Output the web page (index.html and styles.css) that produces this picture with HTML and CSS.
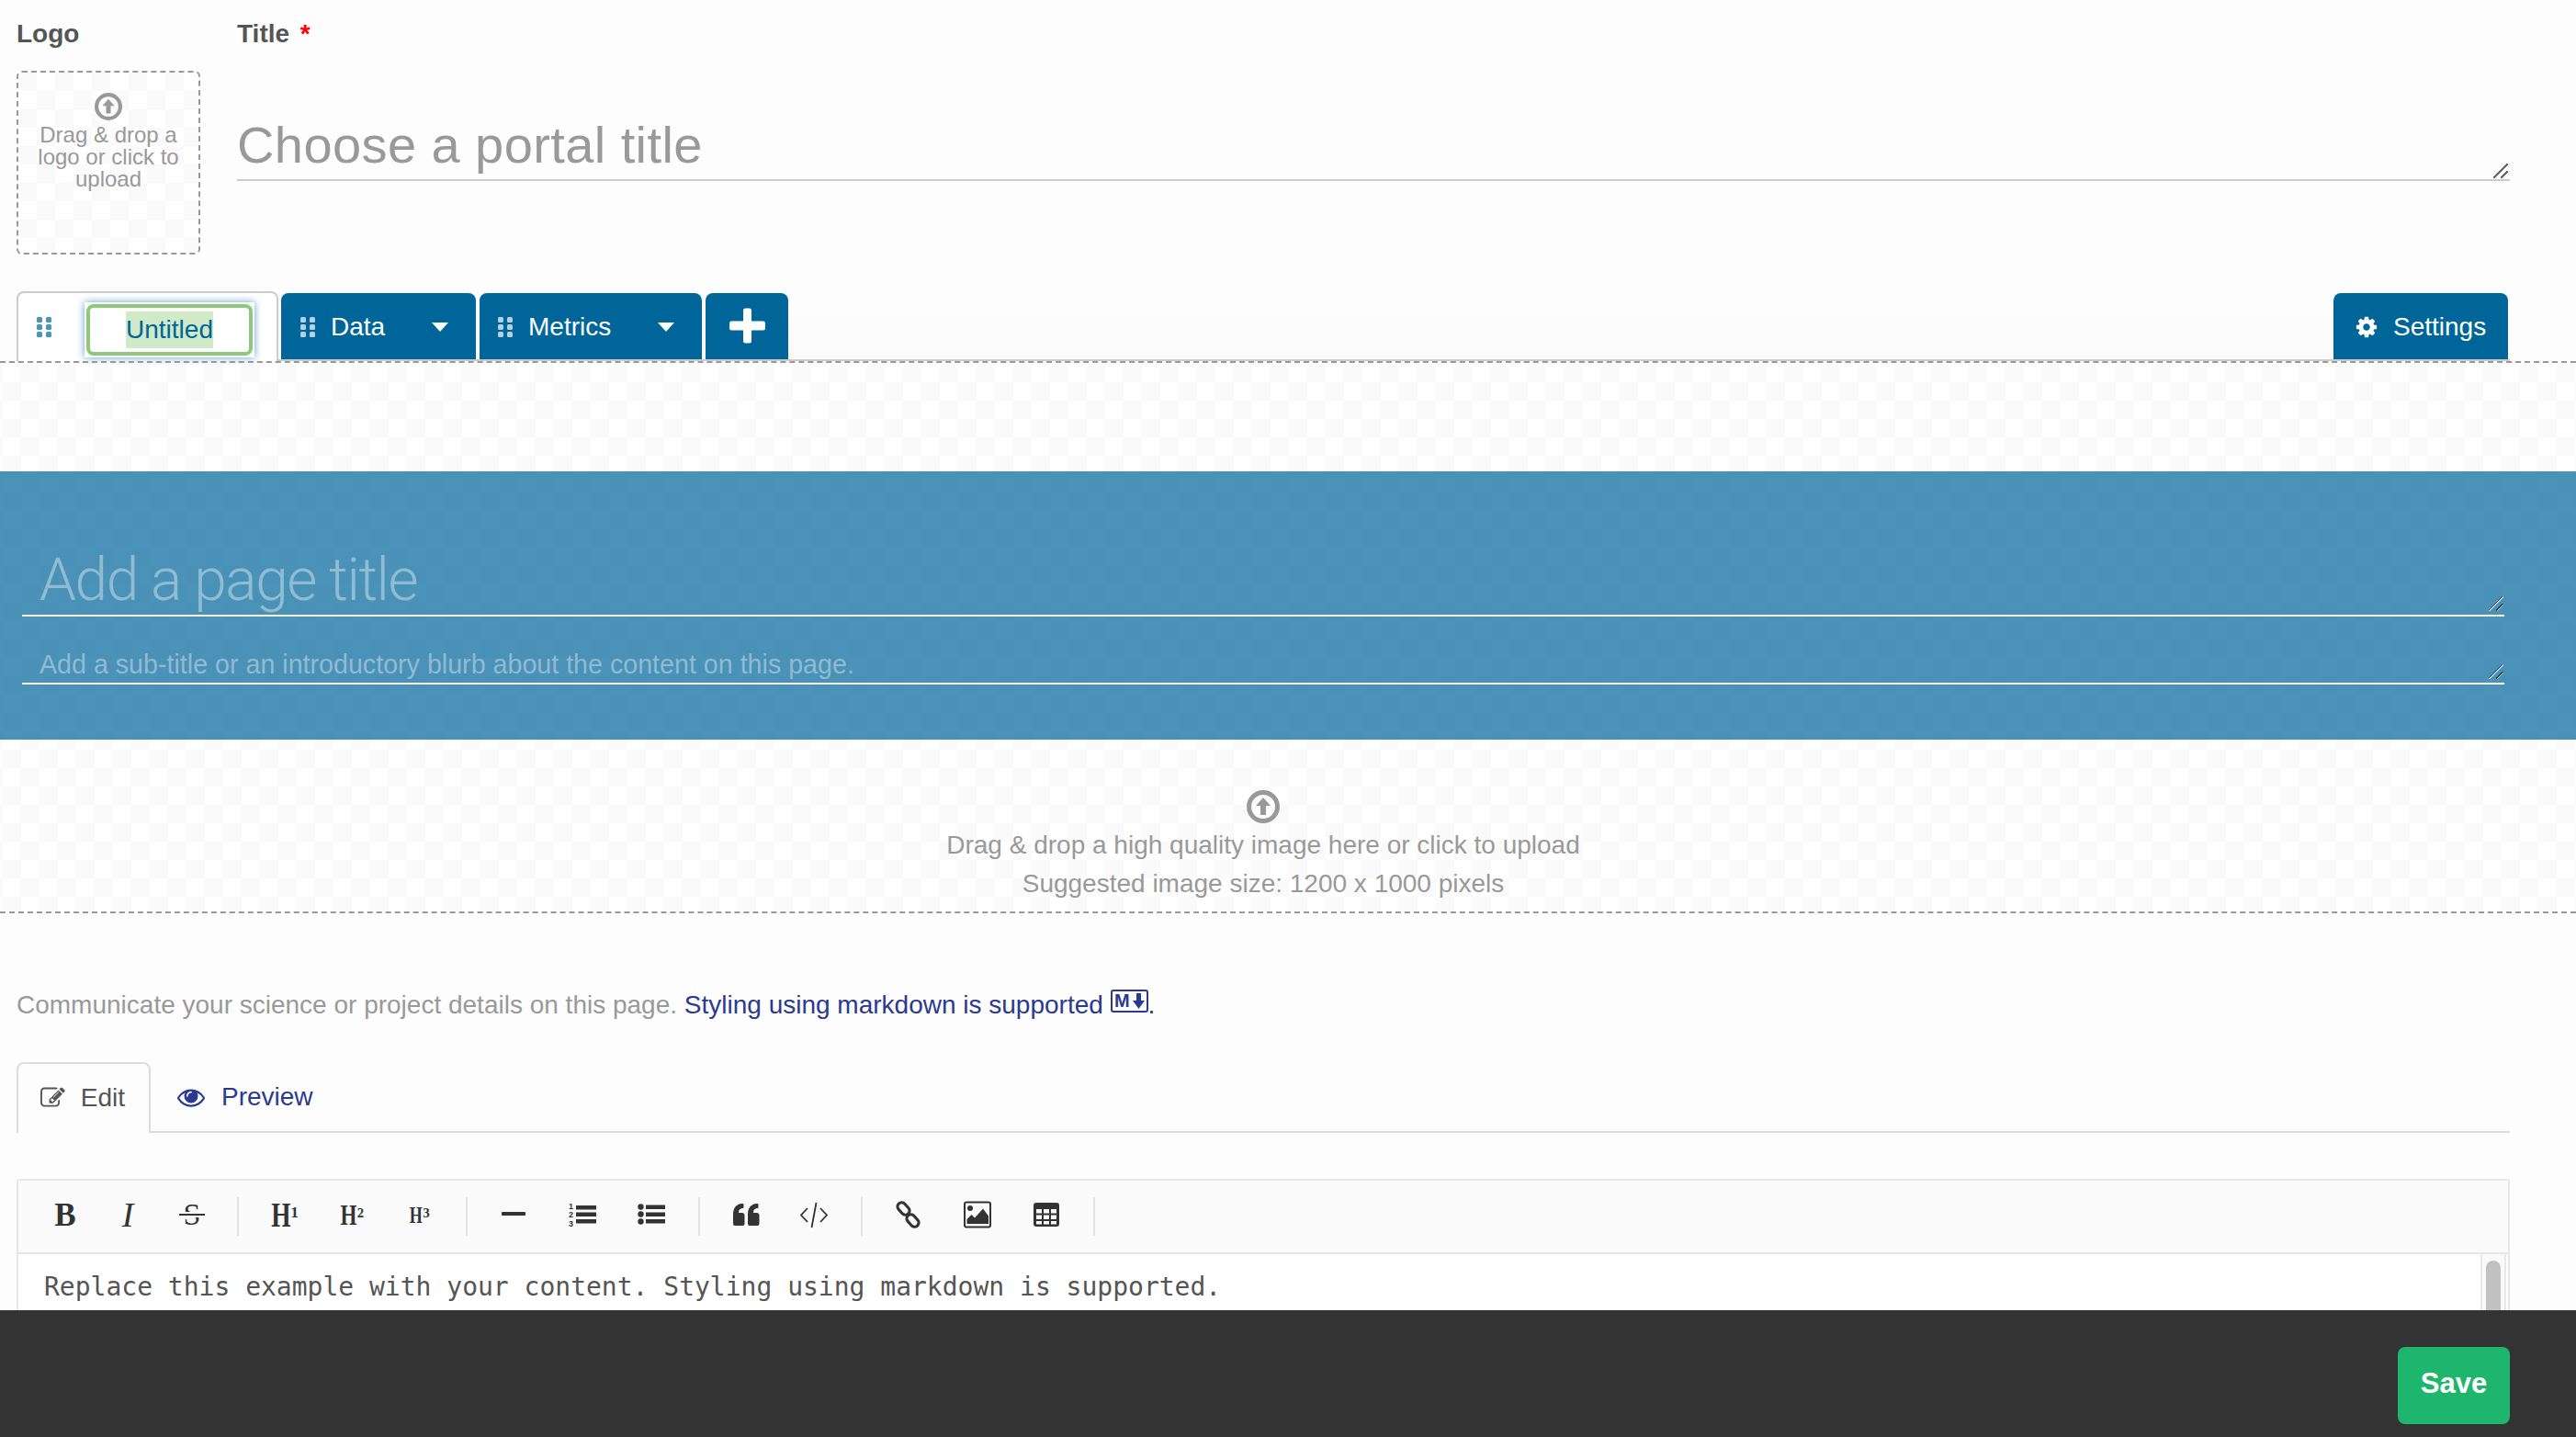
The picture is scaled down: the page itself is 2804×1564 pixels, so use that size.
FILE: index.html
```html
<!DOCTYPE html>
<html lang="en">
<head>
    <meta charset="UTF-8">
    <title>New portal</title>
    <link rel="stylesheet" href="styles.css">
</head>
<body>
    <main class="content">
        <div class="top-form">
            <div class="logo-col">
                <label class="field-label">Logo</label>
                <div class="logo-drop checker">
                    <svg class="upload-icon logo-icon" viewBox="0 0 36 36"><circle cx="18" cy="18" r="15.500" fill="none" stroke="currentColor" stroke-width="5"/><path d="M18 8l8 9h-5v10h-6V17h-5z" fill="currentColor"/></svg>
                    <span>Drag &amp; drop a logo or click to upload</span>
                </div>
            </div>
            <div class="title-col">
                <label class="field-label">Title <span class="req">*</span></label>
                <textarea class="portal-title" placeholder="Choose a portal title"></textarea>
            </div>
        </div>

        <div class="tab-row">
            <div class="page-tab active-tab">
                <svg class="grip" viewBox="0 0 16 22"><g fill="currentColor"><rect x="0" width="6" height="6" rx="1.500"/><rect x="10" width="6" height="6" rx="1.500"/><rect x="0" y="8" width="6" height="6" rx="1.500"/><rect x="10" y="8" width="6" height="6" rx="1.500"/><rect x="0" y="16" width="6" height="6" rx="1.500"/><rect x="10" y="16" width="6" height="6" rx="1.500"/></g></svg>
                <div class="tab-name"><div class="tab-name-box"><span class="tab-name-sel">Untitled</span></div></div>
            </div>
            <div class="page-tab blue-tab data-tab">
                <svg class="grip" viewBox="0 0 16 22"><g fill="currentColor"><rect x="0" width="6" height="6" rx="1.500"/><rect x="10" width="6" height="6" rx="1.500"/><rect x="0" y="8" width="6" height="6" rx="1.500"/><rect x="10" y="8" width="6" height="6" rx="1.500"/><rect x="0" y="16" width="6" height="6" rx="1.500"/><rect x="10" y="16" width="6" height="6" rx="1.500"/></g></svg>
                <span class="tab-text">Data</span>
                <span class="caret"></span>
            </div>
            <div class="page-tab blue-tab metrics-tab">
                <svg class="grip" viewBox="0 0 16 22"><g fill="currentColor"><rect x="0" width="6" height="6" rx="1.500"/><rect x="10" width="6" height="6" rx="1.500"/><rect x="0" y="8" width="6" height="6" rx="1.500"/><rect x="10" y="8" width="6" height="6" rx="1.500"/><rect x="0" y="16" width="6" height="6" rx="1.500"/><rect x="10" y="16" width="6" height="6" rx="1.500"/></g></svg>
                <span class="tab-text">Metrics</span>
                <span class="caret"></span>
            </div>
            <div class="page-tab blue-tab add-tab">
                <svg class="plus" viewBox="0 0 39 39"><path d="M15 3a2.500 2.500 0 0 1 2.500-2.500h4A2.500 2.500 0 0 1 24 3v11.500h12.500A2.500 2.500 0 0 1 39 17v5a2.500 2.500 0 0 1-2.500 2.500H24V36a2.500 2.500 0 0 1-2.500 2.500h-4A2.500 2.500 0 0 1 15 36V24.500H2.500A2.500 2.500 0 0 1 0 22v-5a2.500 2.500 0 0 1 2.500-2.500H15z" fill="currentColor"/></svg>
            </div>
            <div class="page-tab blue-tab settings-tab">
                <svg class="gear" viewBox="0 0 1792 1792"><path fill="currentColor" d="M1152 896q0-106-75-181t-181-75-181 75-75 181 75 181 181 75 181-75 75-181zm512-109v222q0 12-8 23t-20 13l-185 28q-19 54-39 91 35 50 107 138 10 12 10 25t-9 23q-27 37-99 108t-94 71q-12 0-26-9l-138-108q-44 23-91 38-16 136-29 186-7 28-36 28h-222q-14 0-24.500-8.500t-11.500-21.500l-28-184q-49-16-90-37l-141 107q-10 9-25 9-14 0-25-11-126-114-165-168-7-10-7-23 0-12 8-23 15-21 51-66.500t54-70.500q-27-50-41-99l-183-27q-13-2-21-12.500t-8-23.500v-222q0-12 8-23t19-13l186-28q14-46 39-92-40-57-107-138-10-12-10-24 0-10 9-23 26-36 98.500-107.500t94.500-71.500q13 0 26 10l138 107q44-23 91-38 16-136 29-186 7-28 36-28h222q14 0 24.500 8.500t11.500 21.500l28 184q49 16 90 37l142-107q9-9 24-9 13 0 25 10 129 119 165 170 7 8 7 22 0 12-8 23-15 21-51 66.500t-54 70.500q26 50 41 98l183 28q13 2 21 12.500t8 23.500z"/></svg>
                <span class="tab-text">Settings</span>
            </div>
        </div>

        <section class="hero checker">
            <div class="hero-band">
                <textarea class="page-title" placeholder="Add a page title"></textarea>
                <textarea class="page-blurb" placeholder="Add a sub-title or an introductory blurb about the content on this page."></textarea>
            </div>
            <div class="hero-drop">
                <svg class="upload-icon" viewBox="0 0 36 36"><circle cx="18" cy="18" r="15.500" fill="none" stroke="currentColor" stroke-width="5"/><path d="M18 8l8 9h-5v10h-6V17h-5z" fill="currentColor"/></svg>
                <p>Drag &amp; drop a high quality image here or click to upload</p>
                <p>Suggested image size: 1200 x 1000 pixels</p>
            </div>
        </section>

        <div class="body-edit">
            <p class="hint">Communicate your science or project details on this page. <a href="#md">Styling using markdown is supported</a> <svg class="md-mark" viewBox="0 0 41 25"><rect x="1" y="1" width="39" height="23" rx="2" fill="none" stroke="currentColor" stroke-width="2"/><text x="4" y="18.500" class="md-m">M</text><path d="M28 4h5v8h4l-6.500 9L24 12h4z" fill="currentColor"/></svg><a href="#md">.</a></p>

            <div class="edit-tabs">
                <div class="edit-tab edit-active">
                    <svg class="tab-icon" viewBox="0 0 1792 1792"><path fill="currentColor" d="M888 1184l116-116-152-152-116 116v56h96v96h56zm440-720q-16-16-33 1l-350 350q-17 17-1 33t33-1l350-350q17-17 1-33zm80 594v190q0 119-84.500 203.500t-203.500 84.500h-832q-119 0-203.500-84.500t-84.500-203.500v-832q0-119 84.500-203.500t203.500-84.500h832q63 0 117 25 15 7 18 23 3 17-9 29l-49 49q-14 14-32 8-23-6-45-6h-832q-66 0-113 47t-47 113v832q0 66 47 113t113 47h832q66 0 113-47t47-113v-126q0-13 9-22l64-64q15-15 35-7t20 29zm-96-738l288 288-672 672h-288v-288zm444 132l-92 92-288-288 92-92q28-28 68-28t68 28l152 152q28 28 28 68t-28 68z"/></svg>
                    <span>Edit</span>
                </div>
                <div class="edit-tab edit-preview">
                    <svg class="tab-icon" viewBox="0 0 1792 1792"><path fill="currentColor" d="M1664 960q-152-236-381-353 61 104 61 225 0 185-131.500 316.500t-316.500 131.500-316.500-131.500-131.500-316.500q0-121 61-225-229 117-381 353 133 205 333.500 326.500t434.500 121.500 434.500-121.500 333.500-326.500zm-720-384q0-20-14-34t-34-14q-125 0-214.500 89.500t-89.500 214.500q0 20 14 34t34 14 34-14 14-34q0-86 61-147t147-61q20 0 34-14t14-34zm848 384q0 34-20 69-140 230-376.500 368.500t-499.500 138.500-499.500-139-376.500-368q-20-35-20-69t20-69q140-229 376.500-368t499.500-139 499.500 139 376.500 368q20 35 20 69z"/></svg>
                    <span>Preview</span>
                </div>
            </div>

            <div class="editor">
                <div class="toolbar">
                    <span class="tool tool-b">B</span>
                    <span class="tool tool-i">I</span>
                    <span class="tool tool-s"><span class="strike">S</span></span>
                    <i class="tool-sep"></i>
                    <span class="tool tool-h h1"><b>H</b><sup>1</sup></span>
                    <span class="tool tool-h h2"><b>H</b><sup>2</sup></span>
                    <span class="tool tool-h h3"><b>H</b><sup>3</sup></span>
                    <i class="tool-sep"></i>
                    <span class="tool"><svg class="ic" viewBox="0 0 30 30"><rect x="2" y="12" width="26" height="4" rx="1" fill="currentColor"/></svg></span>
                    <span class="tool"><svg class="ic" viewBox="0 0 30 30"><g fill="currentColor"><rect x="8" y="5" width="22" height="4.500"/><rect x="8" y="12.500" width="22" height="4.500"/><rect x="8" y="20" width="22" height="4.500"/></g><g class="ol-nums"><text x="0" y="9">1</text><text x="0" y="18">2</text><text x="0" y="28">3</text></g></svg></span>
                    <span class="tool"><svg class="ic" viewBox="0 0 30 30"><g fill="currentColor"><circle cx="3.500" cy="6.500" r="3.200"/><circle cx="3.500" cy="14.500" r="3.200"/><circle cx="3.500" cy="22.500" r="3.200"/><rect x="9" y="4.500" width="21" height="4.500"/><rect x="9" y="12.500" width="21" height="4.500"/><rect x="9" y="20" width="21" height="4.500"/></g></svg></span>
                    <i class="tool-sep"></i>
                    <span class="tool tool-quote"><svg class="ic" viewBox="0 0 30 30"><path fill="currentColor" d="M3 27a2 2 0 0 1-2-2V15C1 8 4 3.500 11 3c1 0 1.500.5 1.500 1.500v2c0 1-.5 1.500-1.500 1.500-2.500.3-4 2-4 5h3.500c2 0 3 1 3 3V25a2 2 0 0 1-2 2zM19 27a2 2 0 0 1-2-2V15c0-7 3-11.500 10-12 1 0 1.500.5 1.500 1.500v2c0 1-.5 1.500-1.500 1.500-2.500.3-4 2-4 5h3.500c2 0 3 1 3 3V25a2 2 0 0 1-2 2z"/></svg></span>
                    <span class="tool"><svg class="ic" viewBox="0 0 30 30"><g fill="none" stroke="currentColor" stroke-width="1.800"><path d="M8 8l-7 7.500 7 7.500M22 8l7 7.500-7 7.500M17.500 2l-5 27"/></g></svg></span>
                    <i class="tool-sep"></i>
                    <span class="tool"><svg class="ic" viewBox="0 0 30 30"><g fill="none" stroke="currentColor" stroke-width="3.200"><rect x="2" y="4" width="15" height="9" rx="4.500" transform="rotate(48 9.500 8.500)"/><rect x="12" y="17" width="15" height="9" rx="4.500" transform="rotate(48 19.500 21.500)"/></g></svg></span>
                    <span class="tool"><svg class="ic" viewBox="0 0 30 30"><rect x="1" y="1.500" width="28" height="27" rx="2" fill="none" stroke="currentColor" stroke-width="2"/><circle cx="7" cy="8" r="3" fill="currentColor"/><path d="M3.500 25v-5l5-5 3.500 3.500 9-10 6 8V25z" fill="currentColor"/></svg></span>
                    <span class="tool"><svg class="ic" viewBox="0 0 30 30"><path fill="currentColor" fill-rule="evenodd" d="M4 2h22a3 3 0 0 1 3 3v20a3 3 0 0 1-3 3H4a3 3 0 0 1-3-3V5a3 3 0 0 1 3-3zM4 9v4.500h6V9zm8 0v4.500h6V9zm8 0v4.500h6V9zM4 15.500V20h6v-4.500zm8 0V20h6v-4.500zm8 0V20h6v-4.500zM4 22v3.500h6V22zm8 0v3.500h6V22zm8 0v3.500h6V22z"/></svg></span>
                    <i class="tool-sep"></i>
                </div>
                <div class="editor-body">
                    <pre class="editor-text">Replace this example with your content. Styling using markdown is supported.</pre>
                    <div class="scroll-track"><div class="scroll-thumb"></div></div>
                </div>
            </div>
        </div>
    </main>

    <footer class="save-bar">
        <button class="save-btn">Save</button>
    </footer>
</body>
</html>
```

FILE: styles.css
```css
html, body {
    height: 100%;
}
body {
    margin: 0;
    display: flex;
    flex-direction: column;
    overflow: hidden;
    background-color: #fdfdfd;
    font-family: "Liberation Sans", Arial, sans-serif;
    font-size: 28px;
    color: #555;
}
.content {
    flex: 1;
    min-height: 0;
    overflow: hidden;
}
.checker {
    background-color: #fff;
    background-image: conic-gradient(#fafafa 25%, transparent 0 50%, #fafafa 0 75%, transparent 0);
    background-size: 40px 40px;
}

/* logo + title */
.top-form {
    display: flex;
    gap: 40px;
    padding: 17px 72px 0 18px;
}
.logo-col {
    width: 200px;
    flex: none;
}
.title-col {
    flex: 1;
    display: flex;
    flex-direction: column;
}
.field-label {
    display: block;
    height: 40px;
    line-height: 40px;
    margin-bottom: 20px;
    font-weight: bold;
    font-size: 28px;
    color: #555;
}
.req {
    color: #f00;
    margin-left: 4px;
}
.logo-drop {
    box-sizing: border-box;
    height: 200px;
    border: 2px dashed #999;
    border-radius: 6px;
    padding: 22px 16px 0;
    background-position: 20px 0;
    text-align: center;
    font-size: 24px;
    line-height: 24px;
    color: #999;
}
.logo-drop span {
    display: block;
}
.upload-icon {
    display: block;
    width: 36px;
    height: 36px;
    margin: 0 auto;
    color: #999;
}
.logo-icon {
    width: 30px;
    height: 30px;
    margin-bottom: 4px;
}
textarea {
    display: block;
    box-sizing: border-box;
    width: 100%;
    margin: 0;
    background-color: transparent;
    border: 0;
    outline: 0;
    overflow: hidden;
    resize: none;
    font-family: inherit;
}
.portal-title {
    height: 80px;
    margin-top: 40px;
    padding: 8px 0 0;
    font-size: 56px;
    letter-spacing: .42px;
    line-height: 66px;
    border-bottom: 2px solid #ccc;
    background: linear-gradient(135deg, transparent 46%, #666 46% 54%, transparent 54%) right 2px bottom 1px / 16px 16px no-repeat,
        linear-gradient(135deg, transparent 42%, #666 42% 58%, transparent 58%) right 2px bottom 1px / 8px 8px no-repeat;
}
.portal-title::placeholder {
    color: #999;
    opacity: 1;
}

/* page tabs */
.tab-row {
    display: flex;
    align-items: flex-end;
    gap: 4px;
    height: 76px;
    margin: 40px 72px 0 18px;
    border-bottom: 2px solid #ccc;
    box-sizing: border-box;
    background: linear-gradient(to bottom, #fdfdfd 30%, #fafafa);
}
.page-tab {
    box-sizing: border-box;
    display: flex;
    align-items: center;
    height: 72px;
    border-radius: 8px 8px 0 0;
}
.blue-tab {
    padding-top: 2px;
    background-color: #069;
    color: #fff;
}
.active-tab {
    position: relative;
    width: 285px;
    height: 76px;
    margin-bottom: -2px;
    margin-right: -1px;
    padding: 0 24px 0 20px;
    background-color: #fff;
    border: 2px solid #ccc;
    border-bottom: 0;
    color: #069;
}
.grip {
    flex: none;
    width: 16px;
    height: 22px;
    color: rgba(255, 255, 255, .7);
}
.active-tab .grip {
    color: #4a93bb;
}
.tab-name {
    box-sizing: border-box;
    width: 186px;
    height: 60px;
    margin-left: 36px;
    margin-top: 6px;
    padding: 2px;
    box-shadow: 0 0 8px #5d9fc6;
    background-color: #fff;
}
.tab-name-box {
    box-sizing: border-box;
    display: flex;
    align-items: center;
    justify-content: center;
    height: 56px;
    border: 4px solid #8cc97a;
    border-radius: 8px;
    color: #069;
}
.tab-name-sel {
    height: 40px;
    line-height: 40px;
    background-color: #d0e9c6;
}
.data-tab {
    width: 212px;
    padding-left: 21px;
}
.metrics-tab {
    width: 242px;
    padding-left: 20px;
}
.tab-text {
    margin-left: 17px;
}
.caret {
    width: 0;
    height: 0;
    margin-left: auto;
    margin-right: 30px;
    border-left: 9px solid transparent;
    border-right: 9px solid transparent;
    border-top: 10px solid #fff;
}
.add-tab {
    width: 90px;
    padding-top: 0;
    justify-content: center;
}
.plus {
    width: 39px;
    height: 39px;
    margin-top: -2px;
}
.settings-tab {
    width: 190px;
    margin-left: auto;
    margin-right: 2px;
    padding-left: 23px;
}
.gear {
    width: 26px;
    height: 26px;
}
.settings-tab .tab-text {
    margin-left: 16px;
}

/* hero */
.hero {
    border-top: 2px dashed #999;
    border-bottom: 2px dashed #999;
    padding-top: 118px;
    background-position: 3px 1px;
}
.hero-band {
    box-sizing: border-box;
    height: 292px;
    padding: 83px 78px 0 24px;
    background-color: rgba(0, 102, 153, .71);
}
.page-title,
.page-blurb {
    border-bottom: 2px solid #fff;
    background: linear-gradient(135deg, transparent 44%, #1c3a4c 44% 50%, #b5d0df 50% 56%, transparent 56%) right 1px bottom 4px / 16px 16px no-repeat,
        linear-gradient(135deg, transparent 40%, #1c3a4c 40% 52%, #b5d0df 52% 62%, transparent 62%) right 1px bottom 4px / 8px 8px no-repeat;
}
.page-title {
    height: 75px;
    padding: 0 0 0 19px;
    font-family: Roboto, "Liberation Sans", sans-serif;
    font-weight: 300;
    font-size: 64px;
    letter-spacing: -1.400px;
    line-height: 72px;
}
.page-blurb {
    height: 74px;
    padding: 34px 0 0 19px;
    font-size: 28.650px;
    line-height: 36px;
}
.page-title::placeholder,
.page-blurb::placeholder {
    color: #8fbbd3;
    opacity: 1;
}
.hero-drop {
    padding: 55px 54px 9px 0;
    text-align: center;
    color: #999;
}
.hero-drop p {
    margin: 0;
    line-height: 42px;
}
.hero-drop .upload-icon {
    margin-bottom: 3px;
}

/* markdown area */
.body-edit {
    padding: 0 72px 0 18px;
}
.hint {
    margin: 80px 0 0;
    height: 40px;
    line-height: 40px;
    color: #999;
}
.hint a {
    color: #2b3990;
    text-decoration: none;
}
.md-mark {
    width: 41px;
    height: 25px;
    vertical-align: 1px;
    color: #2b3990;
}
.md-m {
    font: bold 20px "Liberation Sans", sans-serif;
    fill: currentColor;
}
.edit-tabs {
    display: flex;
    margin-top: 42px;
    height: 77px;
    box-sizing: border-box;
    border-bottom: 2px solid #ddd;
}
.edit-tab {
    box-sizing: border-box;
    display: flex;
    align-items: center;
    gap: 18px;
    height: 77px;
    padding: 0 26px 2px;
}
.edit-active {
    width: 146px;
    padding-left: 24px;
    background-color: #fdfdfd;
    border: 2px solid #ddd;
    border-bottom: 0;
    border-radius: 8px 8px 0 0;
    gap: 17px;
    color: #555;
}
.edit-preview {
    padding-left: 29px;
    color: #2b3990;
}
.tab-icon {
    width: 30px;
    height: 30px;
}
.editor {
    margin-top: 50px;
    border: 2px solid #e6e6e6;
    border-bottom: 0;
    border-radius: 4px 4px 0 0;
    height: 300px;
}
.toolbar {
    display: flex;
    align-items: center;
    box-sizing: border-box;
    height: 80px;
    padding-left: 17px;
    background-color: #fafafa;
    border-bottom: 2px solid #e6e6e6;
    color: #333;
}
.tool {
    flex: none;
    width: 75px;
    text-align: center;
    line-height: 1;
    margin-top: -4px;
}
.tool-quote {
    width: 74px;
}
.tool-b, .tool-i, .tool-s, .tool-h {
    font-family: "Liberation Serif", serif;
}
.tool-b {
    width: 68px;
    font-weight: bold;
    font-size: 35px;
}
.tool-i {
    width: 68px;
    font-style: italic;
    font-size: 38px;
}
.tool-s {
    width: 72px;
    font-size: 34px;
}
.strike {
    position: relative;
    display: inline-block;
}
.strike::after {
    content: "";
    position: absolute;
    left: -5px;
    right: -5px;
    top: 16px;
    height: 2px;
    background-color: #333;
    box-shadow: 0 -2px 0 #fafafa, 0 2px 0 #fafafa;
}
.tool-h {
    width: 73.500px;
}
.tool-h b {
    display: inline-block;
    transform: scaleX(.72);
    margin: 0 -.1em;
}
.tool-h sup {
    font-weight: bold;
    font-size: .46em;
    vertical-align: .55em;
    line-height: 0;
}
.h1 {
    font-size: 38px;
}
.h2 {
    font-size: 32px;
}
.h3 {
    font-size: 25px;
}
.h3 sup {
    font-size: .6em;
    vertical-align: .4em;
}
.tool-sep {
    flex: none;
    width: 2px;
    height: 42px;
    margin: 0 13px;
    background-color: #e2e2e2;
}
.ic {
    display: inline-block;
    vertical-align: middle;
    width: 30px;
    height: 30px;
}
.ol-nums text {
    font: bold 9px "Liberation Sans", sans-serif;
    fill: currentColor;
}
.editor-body {
    display: flex;
    height: 218px;
    background-color: #fff;
}
.editor-text {
    flex: 1;
    margin: 0;
    padding: 18px 0 0 28px;
    font-family: "DejaVu Sans Mono", monospace;
    font-size: 28px;
    line-height: 36px;
    color: #555;
}
.scroll-track {
    box-sizing: border-box;
    flex: none;
    width: 28px;
    margin-right: 2px;
    padding: 7px 4px 0;
    background-color: #fafafa;
    border-left: 2px solid #e8e8e8;
    border-right: 2px solid #e8e8e8;
}
.scroll-thumb {
    height: 180px;
    background-color: #c1c1c1;
    border-radius: 8px;
}

/* bottom bar */
.save-bar {
    flex: none;
    box-sizing: border-box;
    height: 138px;
    padding: 40px 72px 0 0;
    display: flex;
    justify-content: flex-end;
    align-items: flex-start;
    background-color: #333;
}
.save-btn {
    width: 122px;
    height: 84px;
    padding: 0 0 4px;
    border: 0;
    border-radius: 8px;
    background-color: #1eb56c;
    color: #fff;
    font-family: inherit;
    font-weight: bold;
    font-size: 31px;
}
```
